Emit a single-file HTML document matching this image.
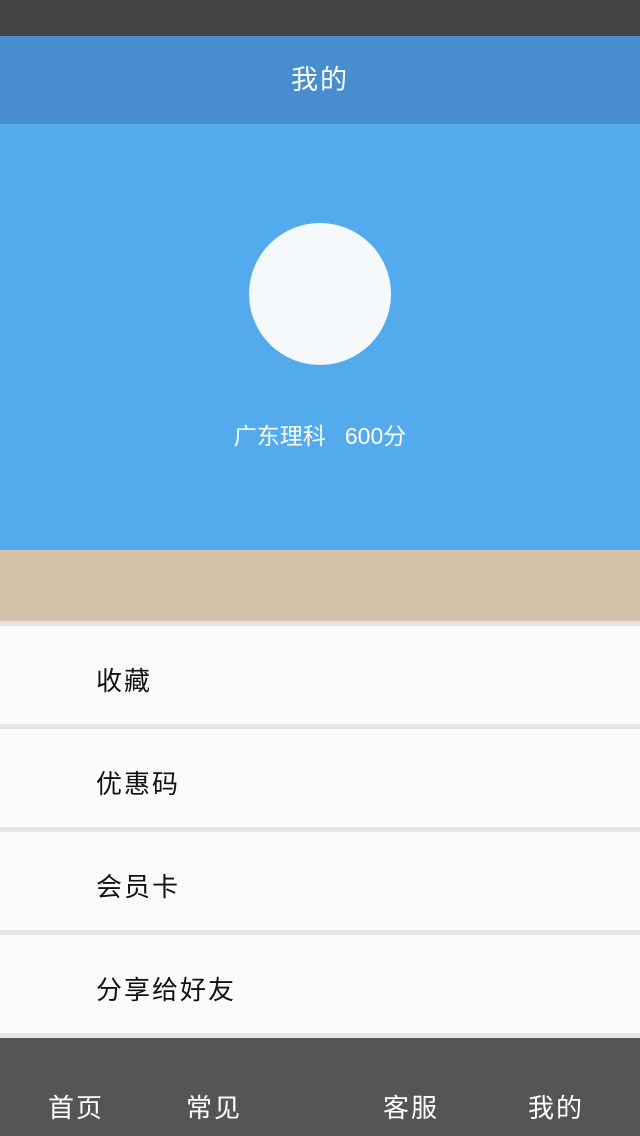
<!DOCTYPE html><html><head><meta charset="utf-8"><style>
body{margin:0;width:640px;height:1136px;position:relative;overflow:hidden;font-family:"Liberation Sans","Noto Sans CJK SC",sans-serif;background:#e5e5e5}
div{position:absolute;box-sizing:border-box}
.r{left:0;width:640px;height:98px;background:#fcfafa;font-size:26px;color:#111;padding-left:96px;padding-top:12px;line-height:86px;letter-spacing:2px}
.f{top:1088px;font-size:26px;color:#fff;line-height:40px;letter-spacing:2px}
</style></head><body>
<div style="top:0;left:0;width:640px;height:36px;background:#444"></div>
<div style="top:36px;left:0;width:640px;height:88px;background:#478dcf;color:#fff;font-size:27px;text-align:center;line-height:88px;letter-spacing:2px">我的</div>
<div style="top:124px;left:0;width:640px;height:426px;background:#53abee"></div>
<div style="top:223px;left:249px;width:142px;height:142px;border-radius:50%;background:#f6f9fb"></div>
<div style="top:418px;left:0;width:640px;text-align:center;color:#fff;font-size:23px;line-height:36px">广东理科&nbsp;&nbsp;&nbsp;600分</div>
<div style="top:550px;left:0;width:640px;height:71px;background:#d2c2a8"></div>
<div class="r" style="top:626px">收藏</div>
<div class="r" style="top:729px">优惠码</div>
<div class="r" style="top:832px">会员卡</div>
<div class="r" style="top:935px">分享给好友</div>
<div style="top:1038px;left:0;width:640px;height:98px;background:#555"></div>
<div class="f" style="left:48px">首页</div>
<div class="f" style="left:186px">常见</div>
<div class="f" style="left:383px">客服</div>
<div class="f" style="left:528px">我的</div>
</body></html>
